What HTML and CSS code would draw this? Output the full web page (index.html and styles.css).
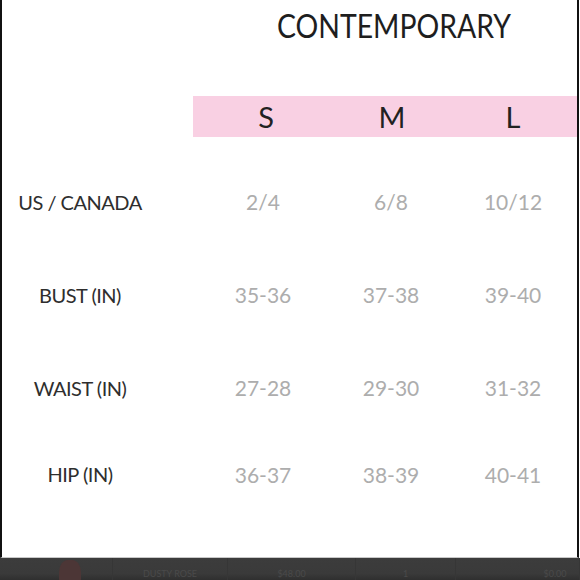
FILE: index.html
```html
<!DOCTYPE html>
<html>
<head>
<meta charset="utf-8">
<link rel="stylesheet" href="styles.css">
</head>
<body>
<div class="frame">
  <div class="sheet">
    <h1 class="title"><span class="title-text">CONTEMPORARY</span></h1>
    <div class="chart">
      <div class="head-spacer"></div>
      <div class="head">
        <span class="size s">S</span>
        <span class="size m">M</span>
        <span class="size l">L</span>
      </div>

      <div class="row r1">
        <span class="label">US / CANADA</span>
        <span class="val">2/4</span><span class="val">6/8</span><span class="val">10/12</span>
      </div>
      <div class="row r2">
        <span class="label">BUST (IN)</span>
        <span class="val">35-36</span><span class="val">37-38</span><span class="val">39-40</span>
      </div>
      <div class="row r3">
        <span class="label">WAIST (IN)</span>
        <span class="val">27-28</span><span class="val">29-30</span><span class="val">31-32</span>
      </div>
      <div class="row r4">
        <span class="label">HIP (IN)</span>
        <span class="val">36-37</span><span class="val">38-39</span><span class="val">40-41</span>
      </div>
    </div>
  </div>
  <div class="bottombar">
    <span class="cell thumb"><span class="swatch"></span></span>
    <span class="cell name">DUSTY ROSE</span>
    <span class="cell price">$48.00</span>
    <span class="cell qty">1</span>
    <span class="cell total">$0.00</span>
  </div>
</div>
</body>
</html>
```
FILE: styles.css
```css
* { box-sizing: border-box; }
html, body { margin: 0; padding: 0; background: #fff; }
body { width: 580px; height: 580px; overflow: hidden; font-family: Lato, "Open Sans", sans-serif; }

.frame {
  width: 580px; height: 580px;
  display: flex; flex-direction: column;
}
.sheet {
  height: 558px;
  margin-right: 1px;
  border-left: 2px solid #111;
  border-right: 2px solid #111;
  border-bottom: 1px solid #c8c8c8;
  background: #fff;
}
.title {
  margin: 0;
  height: 96px;
  padding: 7px 0 0 275px;
  font-size: 33px;
  font-weight: 400;
  color: #1e1e1e;
  line-height: 36px;
}
.title-text {
  display: inline-block;
  transform: scaleX(0.86);
  transform-origin: left center;
}
.chart {
  display: grid;
  grid-template-columns: 191px 1fr;
}
.head-spacer { height: 41px; }
.head {
  background: #f9d0e3;
  height: 41px;
  display: grid;
  grid-template-columns: 140px 116px 1fr;
  align-items: center;
}
.size {
  text-align: center;
  font-size: 29px;
  color: #222;
  line-height: 41px;
}
.size.s { padding-left: 6px; }
.size.m { padding-left: 2px; }

.row {
  grid-column: 1 / 3;
  display: grid;
  grid-template-columns: 156px 35px 140px 116px 1fr;
  align-items: center;
  height: 93px;
}
.row .label { grid-column: 1; }
.row .val:nth-of-type(2) { grid-column: 3; }
.row.r1 { margin-top: 18px; }
.row.r4 { height: 80px; }
.label {
  text-align: center;
  font-size: 20px;
  color: #2e2e2e;
  letter-spacing: -0.5px;
}
.val {
  text-align: center;
  font-size: 21px;
  color: #adadad;
}

.bottombar {
  flex: 1;
  background: linear-gradient(#3c3c3c 0, #3a3a3a 70%, #2f2f2f 100%);
  display: grid;
  grid-template-columns: 28px 85px 115px 128px 100px 75px 1fr;
  overflow: hidden;
}
.cell {
  font-size: 9px;
  color: #4a4a4a;
  line-height: 10px;
  padding-top: 11px;
  border-right: 1px solid #363636;
  text-align: center;
  white-space: nowrap;
}
.thumb { grid-column: 2; padding-top: 2px; }
.swatch { display: block; width: 22px; height: 30px; margin: 0 auto; background: #4c3636; border-radius: 40%; }
.name { grid-column: 3; }
.price { grid-column: 4; }
.qty { grid-column: 5; }
.total { grid-column: 7; }
```
